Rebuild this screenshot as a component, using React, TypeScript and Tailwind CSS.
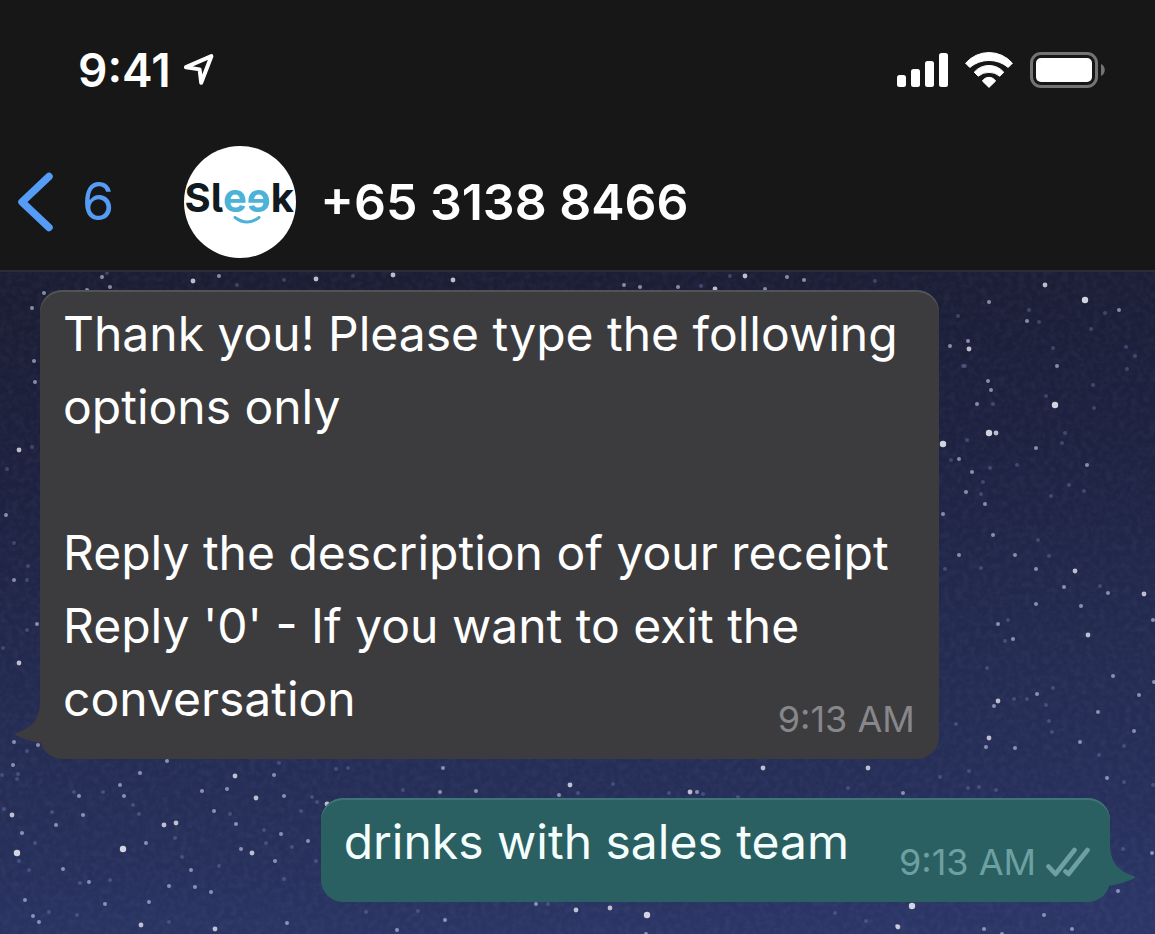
import React from "react";

type Point = [number, number];

const BRIGHT_STARS: Point[] = [
  [1085, 299], [1055, 404], [989, 432], [943, 443], [17, 852], [123, 848], [912, 905], [647, 914],
];

const CLEAR_STARS: Point[] = [
  [193, 280], [453, 279], [745, 275], [715, 288], [19, 449], [969, 348], [996, 432], [1075, 570],
  [1144, 593], [1088, 634], [998, 700], [989, 737], [898, 926], [19, 662], [12, 814], [164, 824],
  [176, 822], [141, 924], [215, 928], [235, 775], [256, 797], [252, 852], [327, 803], [570, 784],
  [690, 791], [763, 767], [868, 767], [576, 909], [610, 907], [316, 278], [393, 274], [1045, 284],
];

const SOFT_STARS: Point[] = [
  [678, 286], [765, 288], [787, 276], [804, 279], [219, 275], [44, 292], [87, 289], [32, 307],
  [34, 360], [35, 381], [989, 301], [1119, 309], [1027, 320], [968, 340], [950, 345], [1057, 365],
  [988, 380], [991, 389], [977, 403], [1036, 447], [959, 458], [972, 471], [1087, 464], [966, 491],
  [985, 503], [943, 513], [993, 534], [959, 554], [1015, 554], [1036, 568], [1064, 586], [1108, 592],
  [1036, 603], [1081, 605], [1153, 619], [998, 623], [1013, 638], [1113, 675], [1154, 681], [994, 705],
  [1037, 693], [1139, 694], [1098, 711], [1134, 730], [986, 746], [1015, 747], [1080, 741], [1107, 777],
  [903, 792], [1152, 852], [1118, 890], [1044, 914], [984, 928], [1072, 928], [1002, 933], [14, 741],
  [38, 744], [13, 764], [22, 832], [56, 824], [79, 795], [83, 814], [120, 784], [124, 795],
  [140, 772], [167, 760], [146, 842], [191, 869], [169, 885], [195, 886], [211, 891], [149, 901],
  [105, 903], [63, 868], [89, 881], [25, 899], [33, 915], [39, 921], [202, 790], [214, 810],
  [227, 788], [236, 823], [274, 774], [284, 795], [281, 833], [241, 848], [275, 860], [308, 840],
  [287, 922], [443, 767], [559, 794], [476, 790], [440, 791], [697, 791], [536, 903], [445, 919],
  [397, 929], [646, 933], [897, 925], [6, 514], [14, 579], [37, 623], [102, 276], [110, 286],
  [624, 284], [640, 286],
];

const FAINT_STARS: Point[] = [
  [353, 275], [701, 285], [730, 275], [875, 280], [107, 272], [237, 284], [284, 279], [32, 446],
  [1105, 312], [1039, 321], [958, 315], [1029, 309], [1091, 328], [963, 365], [965, 365], [1053, 347],
  [1135, 355], [1127, 368], [1126, 346], [1093, 384], [993, 403], [1046, 395], [1094, 407], [967, 439],
  [1065, 432], [1062, 442], [951, 459], [990, 467], [1017, 464], [983, 481], [981, 493], [1069, 484],
  [1084, 490], [1051, 495], [1038, 539], [1049, 555], [945, 568], [981, 567], [1100, 585], [1008, 619],
  [1005, 640], [987, 667], [1053, 687], [1014, 698], [1027, 698], [1046, 704], [1049, 720], [1052, 731],
  [956, 723], [1099, 754], [1124, 745], [969, 770], [940, 776], [968, 787], [979, 786], [996, 789],
  [1124, 781], [1153, 784], [1123, 848], [27, 750], [2, 774], [18, 773], [17, 778], [4, 808],
  [19, 860], [35, 842], [52, 811], [74, 791], [103, 791], [133, 804], [139, 813], [175, 837],
  [182, 856], [29, 869], [80, 882], [110, 879], [49, 911], [77, 914], [169, 921], [230, 813],
  [279, 762], [266, 842], [264, 829], [219, 865], [284, 878], [301, 810], [292, 846], [317, 801],
  [312, 796], [316, 860], [336, 768], [348, 767], [578, 792], [403, 789], [613, 783], [703, 793],
  [848, 787], [669, 792], [738, 796], [548, 903], [418, 910], [366, 911], [866, 920], [835, 912],
  [7, 468], [14, 542], [28, 565], [27, 579], [27, 629], [3, 647],
];

function StarLayer({ points, radius, className }: { points: Point[]; radius: number; className: string }) {
  return (
    <g className={className}>
      {points.map(([x, y]) => (
        <circle key={`${x}-${y}`} cx={x} cy={y} r={radius} />
      ))}
    </g>
  );
}

function Wallpaper() {
  return (
    <svg
      aria-hidden="true"
      className="absolute inset-0 h-full w-full"
      viewBox="0 271 1155 663"
      preserveAspectRatio="xMidYMin slice"
    >
      <defs>
        <linearGradient id="sky" x1="0.45" y1="0" x2="0.55" y2="1">
          <stop offset="0" stopColor="#1b1d34" />
          <stop offset="0.3" stopColor="#1e2241" />
          <stop offset="0.6" stopColor="#232b51" />
          <stop offset="0.85" stopColor="#27305b" />
          <stop offset="1" stopColor="#2b3667" />
        </linearGradient>
        <filter id="grain" x="0" y="0" width="100%" height="100%">
          <feTurbulence type="fractalNoise" baseFrequency="0.16" numOctaves="3" seed="4" />
          <feColorMatrix values="0 0 0 0 0.42  0 0 0 0 0.44  0 0 0 0 0.68  0.9 0.5 0 0 -0.55" />
        </filter>
      </defs>
      <rect x="0" y="271" width="1155" height="663" fill="url(#sky)" />
      <rect x="0" y="271" width="1155" height="663" filter="url(#grain)" opacity="0.12" />
      <StarLayer points={FAINT_STARS} radius={2} className="fill-[#7f8cc4]/35" />
      <StarLayer points={SOFT_STARS} radius={2} className="fill-[#b4b9d8]/70" />
      <StarLayer points={CLEAR_STARS} radius={2.4} className="fill-[#d9d8e4]/85" />
      <StarLayer points={BRIGHT_STARS} radius={3.2} className="fill-[#e6e8ee]/90" />
    </svg>
  );
}

function LocationArrow() {
  return (
    <svg aria-hidden="true" className="h-8 w-8" viewBox="183 54 32 32" fill="none">
      <path
        d="M186 67.2 L211.4 56.2 L201.2 82.8 L199.6 69.4 Z"
        stroke="#fff"
        strokeWidth="4"
        strokeLinejoin="round"
      />
    </svg>
  );
}

function SignalBars() {
  return (
    <svg aria-label="Signal" className="h-9 w-13" viewBox="0 0 52 36" fill="#fff">
      <rect x="1" y="23" width="9" height="12" rx="2.5" />
      <rect x="15" y="17" width="9" height="18" rx="2.5" />
      <rect x="29" y="9" width="9" height="26" rx="2.5" />
      <rect x="43" y="1" width="9" height="34" rx="2.5" />
    </svg>
  );
}

function Wifi() {
  return (
    <svg aria-label="Wi-Fi" className="h-9 w-12" viewBox="965 51 48 36" fill="#fff">
      <g stroke="#fff" strokeWidth="1" strokeLinejoin="round">
        <path d="M965.6 62.2 A31 31 0 0 1 1012.4 62.2 L1008.2 66.4 A30 30 0 0 0 969.8 66.4 Z" />
        <path d="M974.2 71.2 A19.6 19.6 0 0 1 1003.8 71.2 L999.8 75.2 A17 17 0 0 0 978.2 75.2 Z" />
        <path d="M982.4 80 A7.8 7.8 0 0 1 995.6 80 L989 86.4 Z" />
      </g>
    </svg>
  );
}

function Battery() {
  return (
    <svg aria-label="Battery" className="h-9 w-19" viewBox="0 0 76 36">
      <rect x="1.5" y="1.5" width="65" height="33" rx="9.5" fill="none" stroke="#747474" strokeWidth="3" />
      <rect x="6" y="6" width="56" height="24" rx="5" fill="#fff" />
      <path d="M71 12 C76 14 76 22 71 24 Z" fill="#747474" />
    </svg>
  );
}

function DoubleCheck() {
  return (
    <svg
      aria-label="Delivered"
      className="h-8 w-11 shrink-0"
      viewBox="1045 846 44 32"
      fill="none"
      stroke="#6ea0a1"
      strokeWidth="4.6"
      strokeLinecap="round"
      strokeLinejoin="round"
    >
      <path d="M1047.5 866.5 L1054.5 874 L1073.5 850" />
      <path d="M1064.5 871.5 L1067.5 874 L1086.5 850" />
    </svg>
  );
}

function SleekAvatar() {
  return (
    <div className="flex size-28 shrink-0 flex-col items-center justify-center overflow-hidden rounded-full bg-white pr-0.5">
      <span className="flex text-[40px] leading-9 font-bold whitespace-nowrap text-[#101a20] [font-feature-settings:'cv05']">
        Sl
        <span className="text-[#4cb2d8]">e</span>
        <span className="-scale-x-100 text-[#4cb2d8]">e</span>k
      </span>
      <svg aria-hidden="true" className="ml-4 h-2 w-7" viewBox="0 0 28 8" fill="none">
        <path d="M2 1.5 Q14 10.5 26 1.5" stroke="#4cb2d8" strokeWidth="3" strokeLinecap="round" />
      </svg>
    </div>
  );
}

function Tail({ className }: { className: string }) {
  return (
    <svg aria-hidden="true" className={`absolute bottom-3.5 h-12 w-8 ${className}`} viewBox="0 0 32 48">
      <path d="M26 0 C27 22 18 31 2 36 Q0 37.5 2 38.5 Q14 44 28 46 L32 46 L32 0 Z" fill="currentColor" />
    </svg>
  );
}

function IncomingMessage() {
  return (
    <article className="relative grid max-w-[84%] self-start rounded-[22px] bg-[#3c3c3e] pt-[7px] pr-6 pb-6 pl-[23px] shadow-[inset_0_2px_0_#535257]">
      <Tail className="-left-[26px] text-[#3c3c3e]" />
      <div className="col-start-1 row-start-1 text-5xl leading-[73px] text-white">
        <p>Thank you! Please type the following options only</p>
        <br />
        <p>Reply the description of your receipt</p>
        <p>Reply '0' - If you want to exit the conversation</p>
      </div>
      <time className="col-start-1 row-start-1 -mb-1 self-end justify-self-end text-4xl leading-10 text-[#87878b]">
        9:13 AM
      </time>
    </article>
  );
}

function OutgoingMessage() {
  return (
    <article className="relative flex items-end self-end rounded-[22px] bg-[#2a6062] pt-[7px] pr-5 pb-6 pl-[23px] shadow-[inset_0_2px_0_#3f7478]">
      <Tail className="-right-[26px] -scale-x-100 text-[#2a6062]" />
      <p className="mr-[50px] text-5xl leading-[73px] text-[#f4fffd]">drinks with sales team</p>
      <time className="-mb-1 mr-2.5 text-4xl leading-10 text-[#6ea0a1]">9:13 AM</time>
      <DoubleCheck />
    </article>
  );
}

export default function App() {
  return (
    <div className="flex min-h-screen flex-col bg-[#171717] font-['Inter',sans-serif]">
      <header className="border-b-2 border-[#2e2b38]">
        <div className="flex items-center justify-between pt-10 pr-[49px] pl-[78px]">
          <div className="flex items-center gap-3 text-[46px] leading-[60px] font-semibold text-white">
            <span>9:41</span>
            <LocationArrow />
          </div>
          <div className="flex items-center gap-[17px]">
            <SignalBars />
            <Wifi />
            <Battery />
          </div>
        </div>
        <div className="flex items-center pt-[46px] pb-3 pl-4">
          <button type="button" aria-label="Back, 6 unread chats" className="mr-[70px] flex items-center gap-[26px] text-[#549cf6]">
            <svg aria-hidden="true" className="h-15 w-10" viewBox="0 0 40 60" fill="none">
              <path
                d="M33 4.5 L6 30 L33 55.5"
                stroke="currentColor"
                strokeWidth="7.5"
                strokeLinecap="round"
                strokeLinejoin="round"
              />
            </svg>
            <span className="text-[52px] leading-15">6</span>
          </button>
          <SleekAvatar />
          <h1 className="ml-6 text-[50px] leading-15 font-semibold whitespace-nowrap text-white">+65 3138 8466</h1>
        </div>
      </header>
      <main className="relative flex flex-1 flex-col overflow-hidden">
        <Wallpaper />
        <div className="relative flex flex-col gap-[39px] pt-[18px] pr-[45px] pb-8 pl-10">
          <IncomingMessage />
          <OutgoingMessage />
        </div>
      </main>
    </div>
  );
}
